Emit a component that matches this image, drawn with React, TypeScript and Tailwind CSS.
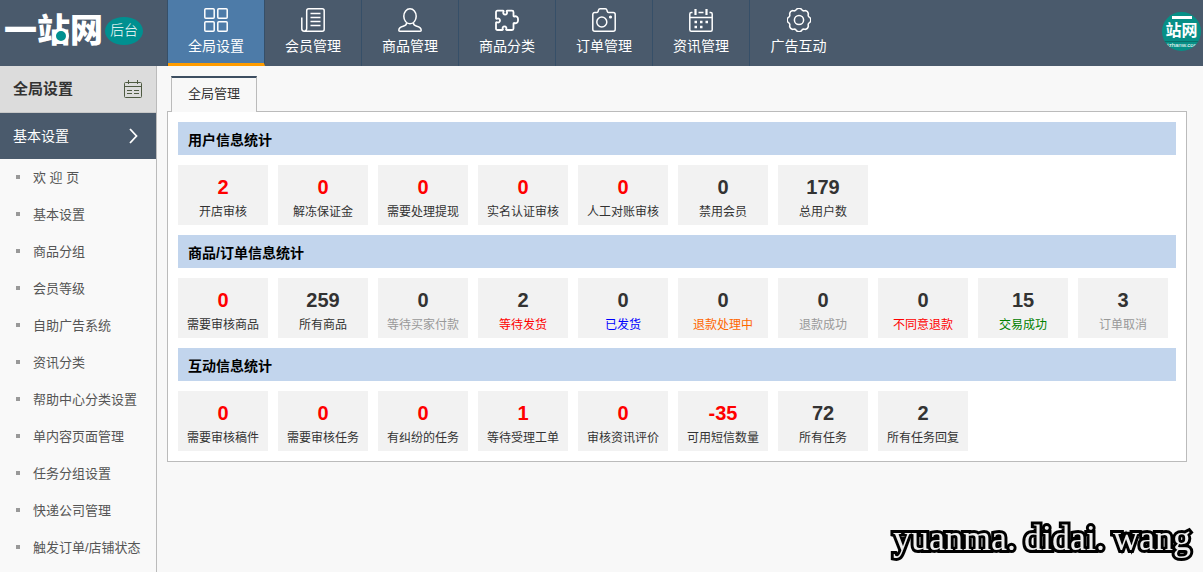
import clsx from "clsx"
import { ReactNode } from "react"

type Stat = {
    value: string
    label: string
    hot?: boolean
    color?: string
}

type Section = {
    title: string
    stats: Stat[]
}

const sections: Section[] = [
    {
        title: "用户信息统计",
        stats: [
            { value: "2", label: "开店审核", hot: true },
            { value: "0", label: "解冻保证金", hot: true },
            { value: "0", label: "需要处理提现", hot: true },
            { value: "0", label: "实名认证审核", hot: true },
            { value: "0", label: "人工对账审核", hot: true },
            { value: "0", label: "禁用会员" },
            { value: "179", label: "总用户数" },
        ],
    },
    {
        title: "商品/订单信息统计",
        stats: [
            { value: "0", label: "需要审核商品", hot: true },
            { value: "259", label: "所有商品" },
            { value: "0", label: "等待买家付款", color: "text-[#999999]" },
            { value: "2", label: "等待发货", color: "text-[#ff0000]" },
            { value: "0", label: "已发货", color: "text-[#0000ff]" },
            { value: "0", label: "退款处理中", color: "text-[#ff6600]" },
            { value: "0", label: "退款成功", color: "text-[#999999]" },
            { value: "0", label: "不同意退款", color: "text-[#ff0000]" },
            { value: "15", label: "交易成功", color: "text-[#008000]" },
            { value: "3", label: "订单取消", color: "text-[#999999]" },
        ],
    },
    {
        title: "互动信息统计",
        stats: [
            { value: "0", label: "需要审核稿件", hot: true },
            { value: "0", label: "需要审核任务", hot: true },
            { value: "0", label: "有纠纷的任务", hot: true },
            { value: "1", label: "等待受理工单", hot: true },
            { value: "0", label: "审核资讯评价", hot: true },
            { value: "-35", label: "可用短信数量", hot: true },
            { value: "72", label: "所有任务" },
            { value: "2", label: "所有任务回复" },
        ],
    },
]

const menu = [
    "欢 迎 页",
    "基本设置",
    "商品分组",
    "会员等级",
    "自助广告系统",
    "资讯分类",
    "帮助中心分类设置",
    "单内容页面管理",
    "任务分组设置",
    "快递公司管理",
    "触发订单/店铺状态",
]

const nav: { label: string, icon: ReactNode }[] = [
    {
        label: "全局设置",
        icon: (
            <>
                <rect x="0.8" y="0.8" width="9.4" height="9.4" rx="1" />
                <rect x="13.8" y="0.8" width="9.4" height="9.4" rx="1" />
                <rect x="0.8" y="13.8" width="9.4" height="9.4" rx="1" />
                <rect x="13.8" y="13.8" width="9.4" height="9.4" rx="1" />
            </>
        ),
    },
    {
        label: "会员管理",
        icon: (
            <>
                <path d="M5.7 20.5V2.8a2 2 0 0 1 2-2h13.5a2 2 0 0 1 2 2v18.4a2 2 0 0 1-2 2H3.2a2.4 2.4 0 0 1-2.4-2.4V9.5M5.7 20.5a2.6 2.6 0 0 1-2.5 2.7" />
                <path d="M9.5 5.5h10M9.5 9.5h10M9.5 13.5h10M9.5 17.5h10" />
            </>
        ),
    },
    {
        label: "商品管理",
        icon: (
            <>
                <ellipse cx="12" cy="8.3" rx="6.2" ry="7.5" />
                <path d="M8.6 15c0 2-1 2.6-3.4 3.3C2.6 19 .9 20 .8 22.2c0 .6.4 1 1 1h20.4c.6 0 1-.4 1-1-.1-2.200-1.800-3.200-4.400-3.900-2.400-.7-3.400-1.300-3.400-3.300" />
            </>
        ),
    },
    {
        label: "商品分类",
        icon: (
            <path
                strokeWidth="1.8"
                d="M2.500 2.700H8c.7 0 .8.6.5 1.100a1.900 1.900 0 1 0 3.300 0c-.3-.5-.2-1.100.5-1.100H17c.9 0 1.500.6 1.500 1.500v3.600c0 .7.6.9 1.100.6a2.600 2.600 0 0 1 3.400 2.400v1.900a2.600 2.600 0 0 1-3.400 2.400c-.5-.3-1.100-.1-1.100.6v4.800c0 .9-.6 1.500-1.500 1.500h-5.300c-.6 0-.8-.5-.5-1 .6-1.300-.2-2.700-1.700-2.700s-2.300 1.400-1.700 2.700c.3.500.1 1-.5 1H2.500C1.600 22 1 21.400 1 20.500v-5.700c0-.6.5-.8 1-.5 1.400.8 3-.2 3-1.800s-1.600-2.600-3-1.800c-.5.300-1 .1-1-.5v-6c0-.9.6-1.500 1.500-1.500z"
            />
        ),
    },
    {
        label: "订单管理",
        icon: (
            <>
                <path d="M2.800 4.500H5c.5 0 .9-.3 1-.8l.5-1.600c.2-.8.8-1.300 1.600-1.300h5.200c.8 0 1.400.5 1.600 1.300l.5 1.600c.1.500.5.8 1 .8h4.800a2 2 0 0 1 2 2v14.700a2 2 0 0 1-2 2H2.800a2 2 0 0 1-2-2V6.500a2 2 0 0 1 2-2z" />
                <circle cx="9.8" cy="14" r="5" />
                <circle cx="18.5" cy="9" r="0.8" fill="currentColor" />
            </>
        ),
    },
    {
        label: "资讯管理",
        icon: (
            <>
                <path d="M3.500 4.500H2.300c-.8 0-1.500.7-1.500 1.500v15.700c0 .8.7 1.500 1.500 1.500h19.400c.8 0 1.500-.7 1.500-1.500V6c0-.8-.7-1.500-1.500-1.500h-1.200M9.500 4.500h5M.8 9.500h22.400" />
                <path d="M6.500 1v6M17.500 1v6" strokeWidth="2.2" />
                <path d="M5.500 14h2.500M11 14h2.500M16.500 14H19M5.500 19h2.500M11 19h2.500" strokeWidth="2.5" />
            </>
        ),
    },
    {
        label: "广告互动",
        icon: (
            <>
                <path d="M22.960 9.670A4 4 0 0 1 22.960 14.330A3 3 0 0 0 21.390 18.100A4 4 0 0 1 18.100 21.390A3 3 0 0 0 14.330 22.960A4 4 0 0 1 9.670 22.960A3 3 0 0 0 5.900 21.390A4 4 0 0 1 2.610 18.100A3 3 0 0 0 1.040 14.330A4 4 0 0 1 1.040 9.670A3 3 0 0 0 2.610 5.900A4 4 0 0 1 5.900 2.610A3 3 0 0 0 9.670 1.040A4 4 0 0 1 14.330 1.040A3 3 0 0 0 18.100 2.610A4 4 0 0 1 21.390 5.900A3 3 0 0 0 22.960 9.670z" />
                <circle cx="12" cy="12" r="4.6" />
            </>
        ),
    },
]

function Header() {
    return (
        <header className="flex h-[66px] bg-[#4a5a6c] text-white">
            <div className="flex w-[167px] shrink-0 items-center pb-[5px] pl-1">
                <span className="relative text-[33px] leading-[38px] font-black whitespace-nowrap">
                    一站网
                    <span className="absolute top-4 left-[49px] size-4 rounded-full border-3 border-white bg-[#009090]" />
                </span>
                <span className="ml-0.5 flex h-7 w-[38px] shrink-0 items-center justify-center rounded-[50%] bg-[#009090] pb-0.5 text-sm font-light whitespace-nowrap">
                    后台
                </span>
            </div>

            <nav className="flex border-l border-[#364f68]">
                {nav.map((item, i) => (
                    <a
                        key={item.label}
                        href="#"
                        className={clsx(
                            "flex w-[97px] flex-col items-center pt-2",
                            i < nav.length - 1 && "border-r border-[#364f68]",
                            i === 0 && "border-b-3 border-b-[#ff9c00] bg-[#4d7ba8]"
                        )}
                    >
                        <svg
                            viewBox="0 0 24 24"
                            className="size-6 shrink-0"
                            fill="none"
                            stroke="currentColor"
                            strokeWidth="1.5"
                            strokeLinejoin="round"
                            aria-hidden="true"
                        >
                            {item.icon}
                        </svg>
                        <span className="mt-1 text-sm leading-5">{item.label}</span>
                    </a>
                ))}
            </nav>

            <div className="mt-3 mr-0.5 ml-auto flex size-[39px] flex-col items-center overflow-hidden rounded-full bg-[#078f86] pt-1">
                <span className="h-[3px] w-5 shrink-0 bg-white" />
                <span className="mt-0.5 text-base leading-5 font-bold whitespace-nowrap">站网</span>
                <span className="w-full border-t border-[#0a6f69] text-center font-['Liberation_Sans'] text-[6px] leading-[7px]">
                    yizhanw.com
                </span>
            </div>
        </header>
    )
}

function Sidebar() {
    return (
        <aside className="w-[157px] shrink-0 border-r border-[#bbbbbb] bg-[#f9f9f9]">
            <div className="flex h-[47px] items-center justify-between border-b border-[#c8c8c8] bg-[#dcdcdc] pr-3.5 pl-[13px]">
                <h2 className="text-[15px] font-bold text-[#333333]">全局设置</h2>
                <svg viewBox="0 0 18 18" className="size-[18px]" fill="none" stroke="#4f5b42" aria-hidden="true">
                    <rect x="0.5" y="2.5" width="17" height="15" rx="1" />
                    <path d="M.5 6.500h17M4.500 0v4M13.500 0v4M3 10.500h5M10 10.500h5M3 13.500h5M10 13.500h5" />
                </svg>
            </div>
            <button type="button" className="flex h-[46px] w-full items-center justify-between bg-[#4a5a6c] pr-[18px] pl-[13px] text-sm text-white">
                基本设置
                <svg viewBox="0 0 9 16" className="h-4 w-[9px]" fill="none" stroke="currentColor" strokeWidth="1.8" aria-hidden="true">
                    <path d="M1 1l6.500 7L1 15" />
                </svg>
            </button>
            <ul>
                {menu.map(item => (
                    <li key={item}>
                        <a href="#" className="flex h-[37px] items-center pl-4 text-[13px] whitespace-nowrap text-[#555555]">
                            <span className="mr-[13px] mb-0.5 size-1 shrink-0 bg-[#999999]" />
                            {item}
                        </a>
                    </li>
                ))}
            </ul>
        </aside>
    )
}

function StatCard({ stat }: { stat: Stat }) {
    return (
        <a href="#" className="flex h-[60px] w-[90px] flex-col items-center bg-[#f2f2f2] pt-2.5 whitespace-nowrap">
            <span className={clsx("font-['Liberation_Sans',sans-serif] text-xl leading-6 font-bold", stat.hot ? "text-[#ff0000]" : "text-[#333333]")}>
                {stat.value}
            </span>
            <span className={clsx("text-xs leading-[26px]", stat.color ?? "text-[#333333]")}>{stat.label}</span>
        </a>
    )
}

export default function App() {
    return (
        <div className="flex min-h-screen flex-col bg-[#f8f8f8] font-['Liberation_Sans','Noto_Sans_CJK_SC',sans-serif]">
            <Header />

            <div className="flex flex-1">
                <Sidebar />

                <main className="min-w-0 flex-1 pt-2.5 pr-4 pl-2.5">
                    <div className="flex pl-1">
                        <a href="#" className="relative -mb-px h-9 border-x border-t-2 border-x-[#bbbbbb] border-t-[#3d4e61] bg-[#f8f8f8] px-4 text-[13px] leading-8 text-[#333333]">
                            全局管理
                        </a>
                    </div>
                    <div className="flex flex-col gap-2.5 border border-[#bbbbbb] bg-white p-2.5">
                        {sections.map(section => (
                            <section key={section.title}>
                                <h3 className="bg-[#c2d5ed] px-2.5 pt-[3px] text-sm leading-[30px] font-bold text-black">{section.title}</h3>
                                <div className="mt-2.5 flex flex-wrap gap-2.5">
                                    {section.stats.map(stat => (
                                        <StatCard key={stat.label} stat={stat} />
                                    ))}
                                </div>
                            </section>
                        ))}
                    </div>
                </main>
            </div>

            <div className="fixed right-3 bottom-3 flex gap-2 font-['Liberation_Serif',serif] text-4xl leading-[44px] text-[#eeeeee] [paint-order:stroke_fill] [-webkit-text-stroke:6px_#000000]">
                <span>yuanma.</span>
                <span>didai.</span>
                <span>wang</span>
            </div>
        </div>
    )
}
